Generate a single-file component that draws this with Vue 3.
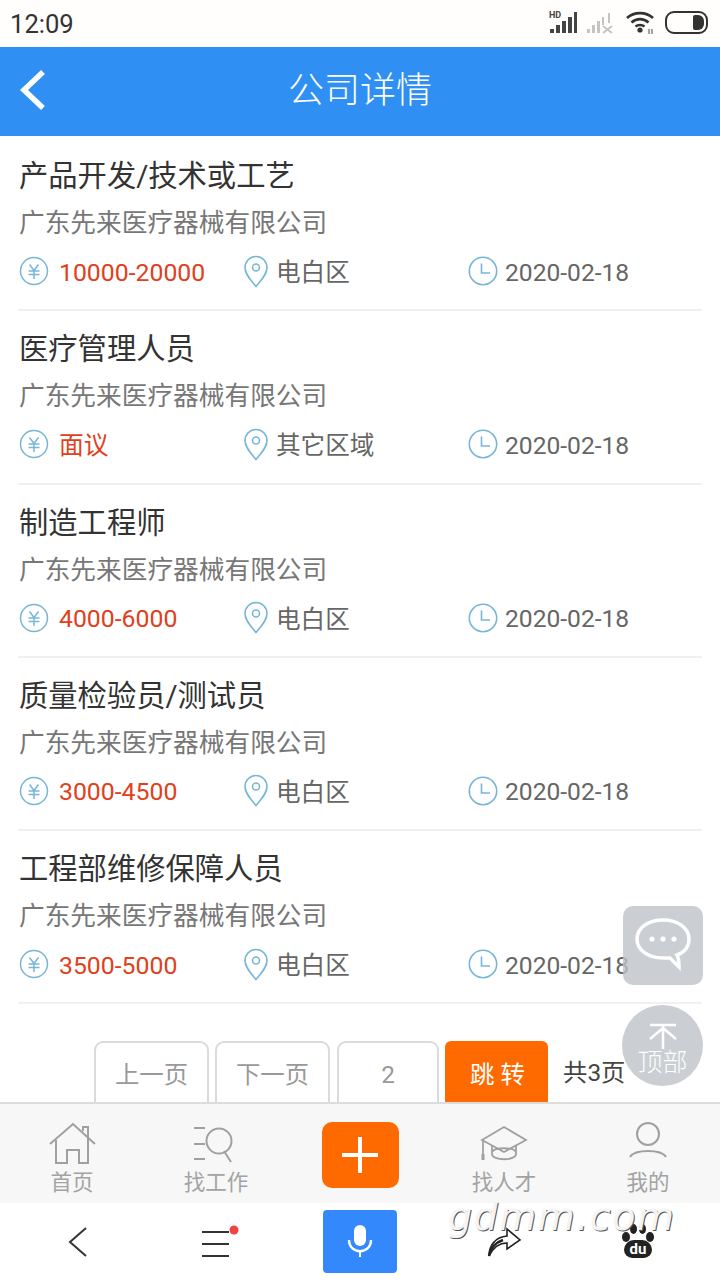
<template>
  <div class="page">
    <div class="status">
      <span class="time">12:09</span>
      <div class="status-icons">
        <svg class="sig" width="29" height="24" viewBox="0 0 29 24">
          <text x="0" y="8" font-size="9" font-weight="700" font-family="Roboto, sans-serif" fill="#444">HD</text>
          <path d="M1 19h4v4H1zM7 15h4v8H7zM13 11h4v12h-4zM19 7h4v16h-4zM25 2h3v21h-3z" fill="#444" />
        </svg>
        <svg class="sig" width="29" height="24" viewBox="0 0 29 24">
          <path d="M1 19h3v4H1zM6 15h3v8H6zM11 11h3v12h-3zM16 7h2v8h-2zM22 3h2v10h-2z" fill="#c4c4c4" />
          <path d="M17 16l9 7M26 16l-9 7" stroke="#c4c4c4" stroke-width="2" />
        </svg>
        <svg class="wifi" width="30" height="24" viewBox="0 0 30 24">
          <path d="M2 8c7-6.500 19-6.500 26 0M6.500 12.500c5-4.500 12-4.500 17 0M10.500 16.500c2.500-2 6.500-2 9 0" fill="none" stroke="#333" stroke-width="2.600" />
          <circle cx="15" cy="20" r="2.600" fill="#333" />
          <path d="M24 19v5M27 19v5" stroke="#444" stroke-width="1" />
        </svg>
        <div class="battery"><span></span></div>
      </div>
    </div>

    <header class="head">
      <svg class="head-back" width="30" height="44" viewBox="0 0 30 44">
        <path d="M25 4L6 22l19 18" fill="none" stroke="#fff" stroke-width="5.500" />
      </svg>
      <h1>公司详情</h1>
    </header>

    <main class="main">
      <div class="list">
        <div class="job" v-for="job in jobs" :key="job.title">
          <div class="job-title">{{ job.title }}</div>
          <div class="job-company">广东先来医疗器械有限公司</div>
          <div class="meta">
            <div class="meta-cell">
              <svg width="30" height="30" viewBox="0 0 30 30" fill="none" stroke="#78b6d8" stroke-width="1.500">
                <circle cx="15" cy="15" r="13.500" />
                <path d="M10.500 8.500L15 14.500l4.500-6M9.500 15h11M9.500 18.500h11M15 14.500V23" />
              </svg>
              <span class="salary" :class="{ cjk: job.salary === '面议' }">{{ job.salary }}</span>
            </div>
            <div class="meta-cell">
              <svg width="26" height="33" viewBox="0 0 26 33" fill="none" stroke="#78b6d8" stroke-width="1.600">
                <path d="M13 31.500C8 25 2 19.500 2 12.500a11 11 0 0 1 22 0c0 7-6 12.500-11 19z" />
                <circle cx="13" cy="12.500" r="3.500" />
              </svg>
              <span class="place cjk">{{ job.area }}</span>
            </div>
            <div class="meta-cell">
              <svg width="30" height="30" viewBox="0 0 30 30" fill="none" stroke="#78b6d8" stroke-width="1.600">
                <circle cx="15" cy="15" r="13.700" />
                <path d="M13.500 7.500V17H22" />
              </svg>
              <span class="place">2020-02-18</span>
            </div>
          </div>
        </div>
      </div>

      <div class="pager">
        <button class="pg pg-text">上一页</button>
        <button class="pg pg-text">下一页</button>
        <button class="pg pg-num">2</button>
        <button class="pg-go">跳 转</button>
        <span class="pg-total">共3页</span>
      </div>
    </main>

    <nav class="tabs">
      <div class="tab">
        <svg width="50" height="46" viewBox="0 0 50 46" fill="none" stroke="#a0a0a0" stroke-width="2">
          <path d="M3 23L26 3l22 20M36 10V6h5v11M9 19v23h11V29h12v13h9V16" />
        </svg>
        <span>首页</span>
      </div>
      <div class="tab">
        <svg width="50" height="46" viewBox="0 0 50 46" fill="none" stroke="#a0a0a0" stroke-width="2">
          <path d="M3 7h11M3 23h11M3 38h11M33 30l7 11" />
          <circle cx="28" cy="20" r="12.500" />
        </svg>
        <span>找工作</span>
      </div>
      <div class="tab">
        <div class="add">
          <svg width="38" height="38" viewBox="0 0 38 38"><path d="M19 1v36M1 19h36" stroke="#fff" stroke-width="4" /></svg>
        </div>
      </div>
      <div class="tab">
        <svg width="50" height="46" viewBox="0 0 50 46" fill="none" stroke="#a0a0a0" stroke-width="1.800">
          <path d="M3 19L25 6l22 13-22 12zM13 25v8c0 7 24 7 24 0v-8M13 31c3-5 21-5 24 0M4 20v13" />
          <rect x="2.500" y="33" width="3" height="6" fill="#a0a0a0" stroke="none" />
        </svg>
        <span>找人才</span>
      </div>
      <div class="tab">
        <svg width="50" height="46" viewBox="0 0 50 46" fill="none" stroke="#a0a0a0" stroke-width="2">
          <circle cx="25" cy="13" r="11" />
          <path d="M7 36c5-8 31-8 36 0" />
        </svg>
        <span>我的</span>
      </div>
    </nav>

    <div class="browser">
      <div class="b-cell">
        <svg class="b-back" width="20" height="32" viewBox="0 0 20 32"><path d="M18 2L2 16l16 14" fill="none" stroke="#333" stroke-width="2" /></svg>
      </div>
      <div class="b-cell">
        <svg class="b-menu" width="42" height="36" viewBox="0 0 42 36">
          <path d="M3 8h27M3 20h27M3 32h27" stroke="#333" stroke-width="2" />
          <circle cx="35" cy="6" r="4.500" fill="#ee4444" />
        </svg>
      </div>
      <div class="b-cell">
        <div class="mic">
          <svg width="26" height="34" viewBox="0 0 26 34" fill="#fff">
            <rect x="7" y="1" width="12" height="21" rx="6" />
            <path d="M2 16c0 15 22 15 22 0" fill="none" stroke="#fff" stroke-width="2.500" />
            <path d="M12 27h2v6h-2z" />
          </svg>
        </div>
      </div>
      <div class="b-cell">
        <svg class="b-share" width="36" height="32" viewBox="0 0 36 32" fill="none" stroke="#222" stroke-width="1.600">
          <path d="M2 30C2 20 8 11 20 10V3l13 11-13 9v-6C12 17 6 22 2 30z" />
          <path d="M2 30C3 24 7 17 16 14" stroke-width="2.400" />
        </svg>
      </div>
      <div class="b-cell">
        <div class="paw">
          <i class="toe t1"></i><i class="toe t2"></i><i class="toe t3"></i><i class="toe t4"></i>
          <span>du</span>
        </div>
      </div>
    </div>

    <div class="float-chat">
      <svg width="60" height="56" viewBox="0 0 60 56" fill="none" stroke="#fff" stroke-width="3.500">
        <path d="M30 3C15 3 4 11 4 22s11 19 26 19c3 0 5 0 7 0l9 9c0-4 0-9-2-12 8-3 12-9 12-16C56 11 45 3 30 3z" />
        <circle cx="19" cy="22" r="2.600" fill="#fff" stroke="none" />
        <circle cx="30" cy="22" r="2.600" fill="#fff" stroke="none" />
        <circle cx="41" cy="22" r="2.600" fill="#fff" stroke="none" />
      </svg>
    </div>
    <div class="float-top">
      <svg width="34" height="26" viewBox="0 0 34 26" fill="none" stroke="#fff" stroke-width="2.500">
        <path d="M4 2h26M17 2v24M17 5L4 16M17 5l13 11" />
      </svg>
      <span>顶部</span>
    </div>

    <div class="mark">gdmm.com</div>
  </div>
</template>

<script setup>
const jobs = [
  { title: '产品开发/技术或工艺', salary: '10000-20000', area: '电白区' },
  { title: '医疗管理人员', salary: '面议', area: '其它区域' },
  { title: '制造工程师', salary: '4000-6000', area: '电白区' },
  { title: '质量检验员/测试员', salary: '3000-4500', area: '电白区' },
  { title: '工程部维修保障人员', salary: '3500-5000', area: '电白区' },
];
</script>

<style>
html, body { margin: 0; padding: 0; background: #fff; }
</style>

<style scoped>
.page {
  position: relative;
  width: 720px;
  height: 1280px;
  overflow: hidden;
  display: flex;
  flex-direction: column;
  background: #fff;
  font-family: Roboto, "Noto Sans CJK SC", sans-serif;
}
.status {
  height: 47px;
  flex: none;
  display: flex;
  align-items: center;
  justify-content: space-between;
  padding: 0 12px 0 10px;
  background: #fffefc;
}
.time { font-size: 25.6px; color: #333; }
.status-icons { display: flex; align-items: center; gap: 8px; margin-bottom: 3px; }
.wifi { margin-left: 2px; }
.battery {
  width: 35px;
  height: 15px;
  margin-left: 2px;
  border: 2px solid #333;
  border-radius: 9px;
  display: flex;
  justify-content: flex-end;
  padding: 2px;
}
.battery span { width: 11px; background: #333; border-radius: 2px 6px 6px 2px; }

.head {
  position: relative;
  height: 89px;
  flex: none;
  box-sizing: border-box;
  padding-bottom: 9px;
  background: #2f8ff2;
  display: flex;
  align-items: center;
  justify-content: center;
}
.head h1 { margin: 0; font-size: 36px; font-weight: 300; color: #fff; }
.head-back { position: absolute; left: 18px; top: 21px; }

.main { flex: 1; overflow: hidden; min-height: 0; }
.list { margin: 2px 18px 0; }
.job {
  height: 173.25px;
  box-sizing: border-box;
  padding: 18px 0 0 1px;
  border-bottom: 2px solid #f0f0f0;
}
.job-title { font-size: 29.3px; line-height: 40px; color: #333; }
.job-company { font-size: 25.7px; line-height: 40px; margin-top: 7px; color: #777; }
.meta { display: grid; grid-template-columns: 224px 225px 1fr; margin-top: 9px; height: 40px; }
.meta-cell { display: flex; align-items: center; }
.meta-cell svg { flex: none; margin-bottom: 2px; }
.salary { margin-left: 10px; font-size: 24.8px; color: #e1401b; }
.place { margin-left: 7px; font-size: 24.6px; color: #666; }
.cjk { margin-bottom: 4px; }

.pager { display: flex; margin: 37px 0 0 94px; }
.pg {
  height: 72px;
  box-sizing: border-box;
  margin: 0 6px 0 0;
  padding: 0 0 10px;
  background: #fff;
  border: 2px solid #d8dcdf;
  border-radius: 9px;
  color: #999;
  font: inherit;
  font-size: 24.4px;
}
.pg-text { width: 115px; }
.pg-num { width: 102px; margin-left: 1px; padding-bottom: 6px; }
.pg-go {
  width: 103px;
  height: 72px;
  padding: 0 0 10px 2px;
  border: none;
  border-radius: 6px;
  background: #ff6a00;
  color: #fff;
  font: inherit;
  font-size: 24.4px;
}
.pg-total { margin-left: 15px; line-height: 64px; font-size: 24.4px; color: #444; }

.tabs {
  height: 101px;
  flex: none;
  box-sizing: border-box;
  border-top: 2px solid #dcdcdc;
  background: #f7f7f7;
  display: grid;
  grid-template-columns: repeat(5, 144px);
}
.tab {
  display: flex;
  flex-direction: column;
  align-items: center;
  padding-top: 17px;
  font-size: 21.500px;
  line-height: 30px;
  color: #a3a3a3;
}
.tab span { margin-top: 1px; }
.add {
  width: 77px;
  height: 66px;
  margin-top: 1px;
  border-radius: 10px;
  background: #ff6a00;
  display: flex;
  align-items: center;
  justify-content: center;
}

.browser {
  height: 77px;
  flex: none;
  background: #fff;
  display: grid;
  grid-template-columns: repeat(5, 144px);
}
.b-cell { display: flex; align-items: center; justify-content: center; }
.b-back { margin-left: 12px; }
.b-menu { margin-left: 7px; }
.b-share { margin-left: 2px; }
.mic {
  width: 74px;
  height: 63px;
  border-radius: 4px;
  margin-top: -1px;
  background: #3388fb;
  display: flex;
  align-items: center;
  justify-content: center;
}
.paw { position: relative; width: 32px; height: 34px; margin-left: -20px; margin-top: -2px; }
.paw span {
  position: absolute;
  left: 2px;
  bottom: 0;
  width: 28px;
  height: 18px;
  border-radius: 12px 12px 10px 10px;
  background: #222;
  color: #fff;
  font-size: 15px;
  font-weight: 700;
  line-height: 18px;
  text-align: center;
}
.toe { position: absolute; background: #222; border-radius: 50%; }
.t1 { left: 0; top: 8px; width: 8px; height: 10px; }
.t2 { left: 8px; top: 0; width: 7px; height: 10px; }
.t3 { left: 17px; top: 0; width: 7px; height: 10px; }
.t4 { right: 0; top: 8px; width: 8px; height: 10px; }

.float-chat {
  position: absolute;
  left: 623px;
  top: 906px;
  width: 80px;
  height: 79px;
  border-radius: 10px;
  background: rgba(190, 194, 199, 0.8);
  display: flex;
  align-items: center;
  justify-content: center;
  padding-bottom: 1px;
  box-sizing: border-box;
}
.float-top {
  position: absolute;
  left: 622px;
  top: 1005px;
  width: 81px;
  height: 81px;
  border-radius: 50%;
  background: rgba(190, 194, 199, 0.8);
  display: flex;
  flex-direction: column;
  align-items: center;
  padding-top: 18px;
  box-sizing: border-box;
}
.float-top span { margin-top: 2px; font-size: 25px; line-height: 24px; color: #fff; font-weight: 300; }

.mark {
  position: absolute;
  left: 448px;
  top: 1190px;
  font-family: "DejaVu Sans", sans-serif;
  font-style: italic;
  font-weight: 200;
  font-size: 38px;
  line-height: 54px;
  letter-spacing: 1.5px;
  color: #f4f4f4;
  text-shadow: 1px 1px 0 #555;
}
</style>
